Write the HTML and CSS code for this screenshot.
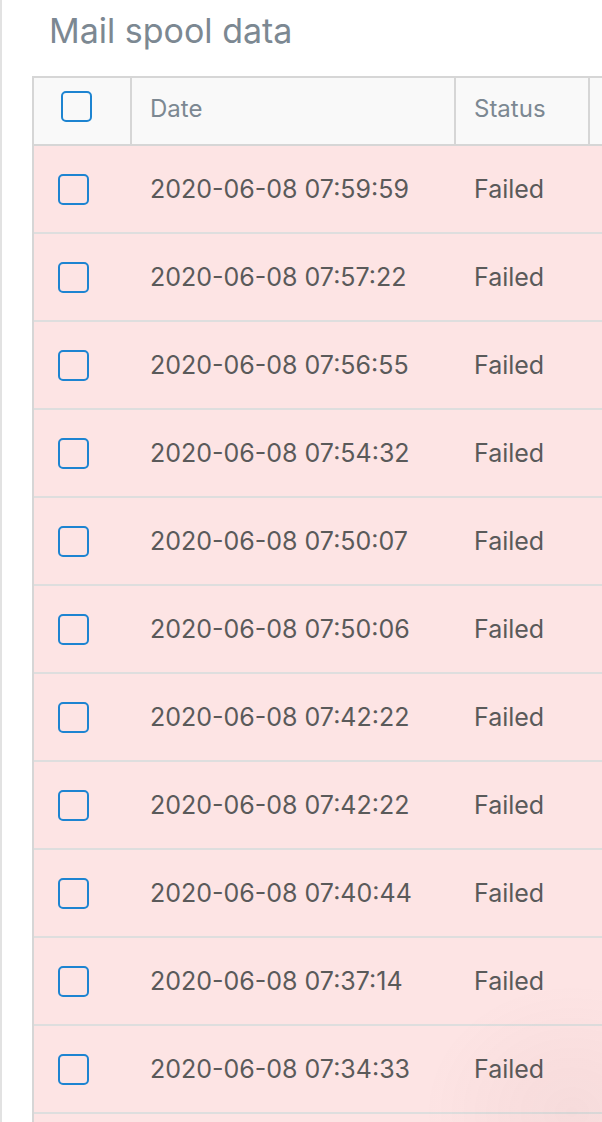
FILE: index.html
```html
<!DOCTYPE html>
<html lang="en">
<head>
<meta charset="UTF-8" />
<meta name="viewport" content="width=device-width, initial-scale=1" />
<title>Mail spool data</title>
<link rel="stylesheet" href="styles.css">
</head>
<body>

<div class="page">
  <h1 class="title">Mail spool data</h1>

  <table class="spool">
    <colgroup>
      <col class="c-check">
      <col class="c-date">
      <col class="c-status">
      <col class="c-more">
    </colgroup>
    <thead>
      <tr>
        <th class="check-cell"><span class="box"></span></th>
        <th>Date</th>
        <th>Status</th>
        <th></th>
      </tr>
    </thead>
    <tbody>
      <tr><td class="check-cell"><span class="box"></span></td><td>2020-06-08 07:59:59</td><td>Failed</td><td></td></tr>
      <tr><td class="check-cell"><span class="box"></span></td><td>2020-06-08 07:57:22</td><td>Failed</td><td></td></tr>
      <tr><td class="check-cell"><span class="box"></span></td><td>2020-06-08 07:56:55</td><td>Failed</td><td></td></tr>
      <tr><td class="check-cell"><span class="box"></span></td><td>2020-06-08 07:54:32</td><td>Failed</td><td></td></tr>
      <tr><td class="check-cell"><span class="box"></span></td><td>2020-06-08 07:50:07</td><td>Failed</td><td></td></tr>
      <tr><td class="check-cell"><span class="box"></span></td><td>2020-06-08 07:50:06</td><td>Failed</td><td></td></tr>
      <tr><td class="check-cell"><span class="box"></span></td><td>2020-06-08 07:42:22</td><td>Failed</td><td></td></tr>
      <tr><td class="check-cell"><span class="box"></span></td><td>2020-06-08 07:42:22</td><td>Failed</td><td></td></tr>
      <tr><td class="check-cell"><span class="box"></span></td><td>2020-06-08 07:40:44</td><td>Failed</td><td></td></tr>
      <tr><td class="check-cell"><span class="box"></span></td><td>2020-06-08 07:37:14</td><td>Failed</td><td></td></tr>
      <tr><td class="check-cell"><span class="box"></span></td><td>2020-06-08 07:34:33</td><td>Failed</td><td></td></tr>
      <tr><td></td><td></td><td></td><td></td></tr>
    </tbody>
  </table>
</div>

<div class="corner-shadow"></div>

</body>
</html>
```

FILE: styles.css
```css
html, body { margin: 0; padding: 0; height: 100%; overflow: hidden; }
body {
  font-family: Inter, "Open Sans", sans-serif;
  background: #fff;
  border-left: 2px solid #e2e2e2;
  box-sizing: border-box;
}
.page { padding-left: 30px; }

.title {
  margin: 0; padding: 11px 0 0 17px; height: 76px; box-sizing: border-box;
  font-size: 34px; font-weight: 400; line-height: 40px; color: #7c8892;
}

.spool {
  border-collapse: separate; border-spacing: 0; table-layout: fixed; width: 820px;
  border-top: 2px solid #d6d6d6; border-left: 2px solid #d6d6d6;
}
.c-check { width: 98px; }
.c-date { width: 324px; }
.c-status { width: 134px; }
.c-more { width: 264px; }

.spool th {
  height: 60px; padding: 0 0 6px 18px; text-align: left; background: #f9f9f9;
  font-size: 24px; font-weight: 400; color: #7c8892;
  border-right: 2px solid #d6d6d6; border-bottom: 2px solid #d6d6d6;
}
.spool td {
  height: 86px; padding: 0 0 0 18px; background: #fde4e4;
  font-size: 25px; color: #5a5a5a;
  border-bottom: 2px solid #dedede;
}
.spool th.check-cell { padding: 0 0 10px 27px; height: 56px; }
.spool td.check-cell { padding-left: 24px; }

.box {
  display: block; width: 31px; height: 31px; box-sizing: border-box;
  border: 2.5px solid #1d84d1; border-radius: 5px;
}

.corner-shadow {
  position: fixed; right: -120px; bottom: -120px; width: 300px; height: 260px;
  background: radial-gradient(ellipse at center, rgba(120, 60, 60, 0.05), rgba(120, 60, 60, 0) 70%);
  pointer-events: none;
}
```
